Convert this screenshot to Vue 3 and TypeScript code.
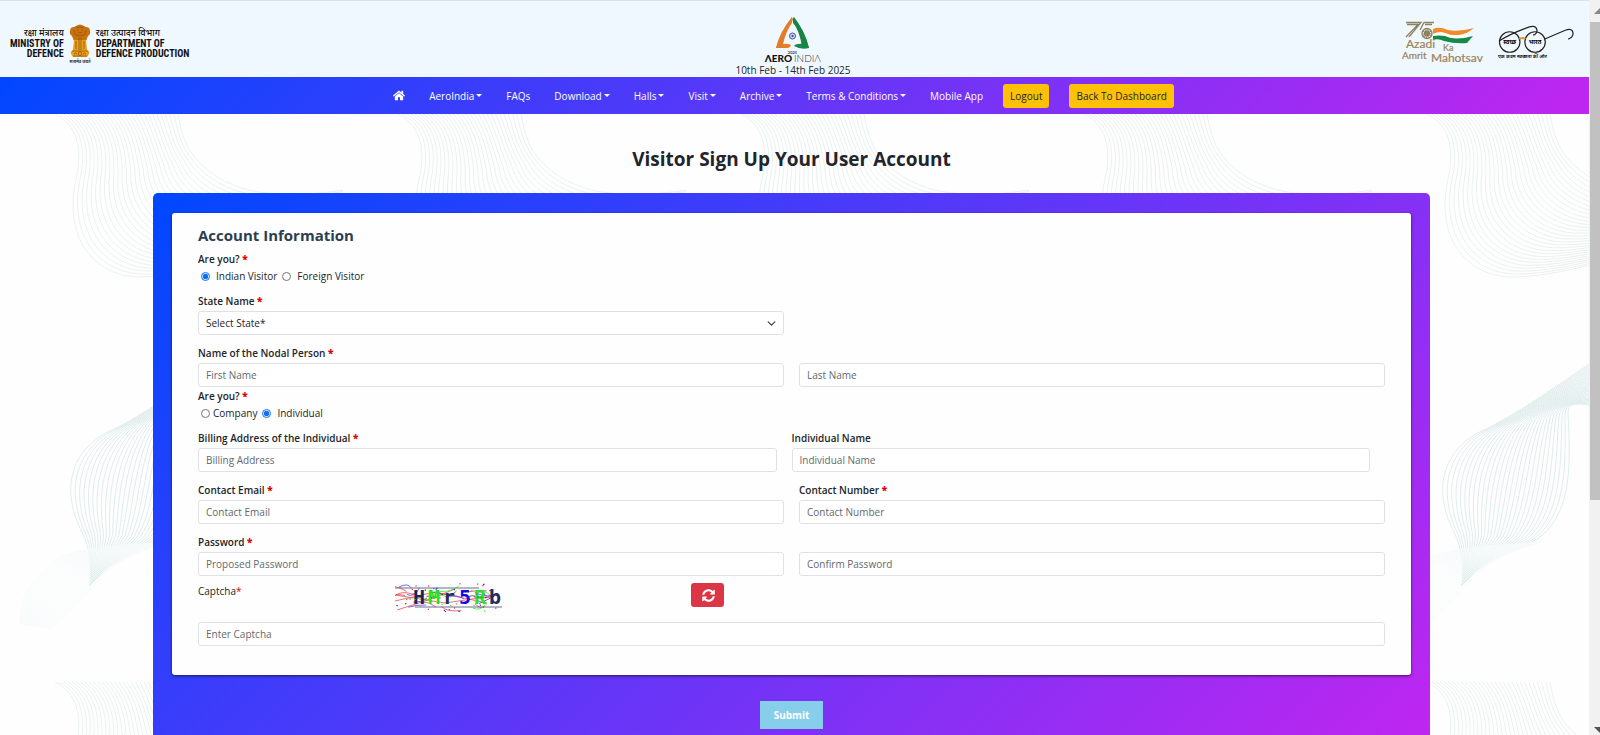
<script setup lang="ts">
import { ref } from 'vue'

interface NavItem {
  label: string
  menu: boolean
}

const navItems: NavItem[] = [
  { label: 'AeroIndia', menu: true },
  { label: 'FAQs', menu: false },
  { label: 'Download', menu: true },
  { label: 'Halls', menu: true },
  { label: 'Visit', menu: true },
  { label: 'Archive', menu: true },
  { label: 'Terms & Conditions', menu: true },
  { label: 'Mobile App', menu: false },
]

const visitorType = ref('indian')
const accountType = ref('individual')

// Each wave is a family of lines blended between two boundary curves.
function blend(from: number[], to: number[], count: number): string[] {
  const lines: string[] = []
  for (let i = 0; i < count; i++) {
    const t = i / (count - 1)
    const p = from.map((v, k) => (v + (to[k] - v) * t).toFixed(1))
    let d = `M${p[0]} ${p[1]}`
    for (let k = 2; k < p.length; k += 6) d += ` C${p.slice(k, k + 6).join(' ')}`
    lines.push(d)
  }
  return lines
}

const upperWave = blend(
  [55, 0, 80, 12, 82, 40, 76, 65, 62, 130, 100, 163, 140, 163, 200, 163, 280, 130, 343, 120],
  [178, 0, 182, 22, 186, 34, 198, 47, 212, 63, 235, 74, 258, 78, 290, 82, 320, 80, 343, 76],
  30,
)
const middleWave = blend(
  [250, 228, 190, 268, 150, 297, 116, 314, 66, 335, 62, 380, 82, 418, 90, 435, 92, 450, 90, 472],
  [250, 295, 205, 290, 196, 285, 196, 300, 198, 345, 202, 400, 165, 425, 140, 440, 115, 440, 90, 472],
  28,
)
const lowerWave = blend(
  [165, 428, 140, 432, 70, 430, 50, 450, 30, 470, 20, 480, 20, 510],
  [165, 430, 120, 440, 105, 460, 90, 475, 75, 495, 60, 505, 50, 515],
  22,
)

// Deterministic noise for the captcha picture.
let seed = 11
function rnd(max: number): number {
  seed = (seed * 16807) % 2147483647
  return Math.round((seed / 2147483647) * max * 10) / 10
}
const inks = ['#e0303a', '#19e619', '#3a2fd0', '#1f2a5c', '#d22b50']
const scribbles = Array.from({ length: 24 }, (_, i) => {
  const x = rnd(84)
  const y = 3 + rnd(22)
  return { d: `M${x} ${y} q${4 + rnd(6)} ${rnd(12) - 6} ${8 + rnd(12)} ${rnd(16) - 8}`, c: inks[i % 5] }
})
const specks = Array.from({ length: 46 }, (_, i) => ({ x: rnd(105), y: rnd(28), c: inks[(i * 2) % 5] }))
const letters = [
  { ch: 'H', x: 18, c: '#1c2454' },
  { ch: 'M', x: 33, c: '#1fe32a' },
  { ch: 'r', x: 48, c: '#262b58' },
  { ch: '5', x: 64, c: '#1508e0' },
  { ch: 'R', x: 79, c: '#26e52f' },
  { ch: 'b', x: 94, c: '#222a60' },
]
</script>

<template>
  <div class="window">
    <div class="page">
      <header class="masthead">
        <a class="ministry" href="#" aria-label="Ministry of Defence">
          <span class="org org-left">
            <span class="hindi">रक्षा मंत्रालय</span>
            <span class="latin">MINISTRY OF<br />DEFENCE</span>
          </span>
          <svg class="emblem" viewBox="0 0 22 40" aria-hidden="true">
            <g fill="#c9730f">
              <path d="M7 2 Q11-1 15 2 L17 3 Q21 3 21 7 Q22 10 19 12 L17 17 H5 L3 12 Q0 10 1 7 Q1 3 5 3Z" />
              <path d="M5 16 H17 L18 26 Q21 27 20 30 L18 33 H4 L2 30 Q1 27 4 26Z" fill="#e8a01c" />
            </g>
            <g fill="none" stroke="#8a4a08" stroke-width=".7">
              <path d="M7 4 Q11 2 15 4 M8 6 h1 M13 6 h1 M9 8 Q11 10 13 8 M4 6 Q7 7 6 11 M18 6 Q15 7 16 11 M7 11 Q11 13 15 11" />
              <path d="M7 17 V25 M10 14 V26 M12 14 V26 M15 17 V25 M3 27 H19 M4 32 H18" />
              <circle cx="11" cy="29.500" r="1.800" />
              <path d="M5 30 q1.500-2 3 0 M14 30 q1.500-2 3 0" />
            </g>
            <text x="11" y="38.500" text-anchor="middle" font-size="4" font-weight="700" fill="#333">सत्यमेव जयते</text>
          </svg>
          <span class="org">
            <span class="hindi">रक्षा उत्पादन विभाग</span>
            <span class="latin">DEPARTMENT OF<br />DEFENCE PRODUCTION</span>
          </span>
        </a>

        <div class="event">
          <svg class="event-logo" viewBox="0 0 60 48" role="img" aria-label="Aero India 2025">
            <path d="M29 1 Q18 16 13 32 H24 Q27 32 28 29 Q25 27 20 28 Q23 15 29 7Z" fill="#e5812b" />
            <path d="M31 1 Q42 15 46 32 Q38 34 31 30 Q33 27 41 28 Q37 14 30 7Z" fill="#1c8a48" />
            <path d="M29 1 Q16 17 13 32 L19 32 Q21 15 30 4Z" fill="#e07c2a" />
            <path d="M30 1 Q41 13 46 32 L39 31 Q37 16 30 6Z" fill="#178443" />
            <circle cx="29.500" cy="20" r="3" fill="#dfe5f6" stroke="#3c4da0" />
            <circle cx="29.500" cy="20" r="1.200" fill="#3c4da0" />
            <text x="29.500" y="37.500" text-anchor="middle" font-size="4" font-weight="700" fill="#444">2025</text>
            <text x="29" y="46" text-anchor="end" font-size="10" font-weight="900" fill="#111">ΛERO</text>
            <text x="31" y="46" font-size="10" font-weight="300" fill="#333">INDIΛ</text>
          </svg>
          <p class="event-date">10th Feb - 14th Feb 2025</p>
        </div>

        <div class="partners">
          <svg class="azadi" viewBox="0 0 90 42" role="img" aria-label="Azadi Ka Amrit Mahotsav">
            <g fill="none" stroke="#8d8260" stroke-width="1.300">
              <path d="M4 1.500 H19 L7 16 M5 3.500 H16 L4 16 M32 1.500 H22 L18 9 M30 3.500 H23" />
              <circle cx="25" cy="12.500" r="5" />
              <circle cx="25" cy="12.500" r="2.500" fill="#8d8260" />
              <circle cx="25" cy="12.500" r="4" stroke-dasharray="1 1" />
            </g>
            <path d="M31 8 Q37 5 46 9 Q57 11 72 7 L65 12 Q53 17 43 12 Q36 10 31 13Z" fill="#f28c28" />
            <path d="M31 13 Q37 10 43 12 Q53 17 67 11 L64 16 Q53 19 43 16 Q37 15 31 17Z" fill="#fff" />
            <path d="M31 15 Q37 14 43 15 Q53 20 71 15 L65 22 Q53 23 42 20 Q36 17 31 19Z" fill="#128b46" />
            <g fill="#9a8258" stroke="#9a8258" stroke-width=".2">
              <text x="4" y="27" font-size="12">Azadi</text>
              <text x="41" y="30" font-size="9">Ka</text>
              <text x="0" y="38" font-size="10">Amrit</text>
              <text x="29" y="41" font-size="12">Mahotsav</text>
            </g>
          </svg>
          <svg class="glasses" viewBox="0 0 80 36" role="img" aria-label="स्वच्छ भारत">
            <g fill="none" stroke="#222" stroke-width="1.200">
              <circle cx="12" cy="18" r="10.500" />
              <circle cx="38" cy="18" r="10.500" />
              <path d="M1 17 Q12 10 28 4 Q39-1 40 6 Q40 10 36 11 M48 15 L69 6 Q77 3 77 10 Q76 14 72 15" />
            </g>
            <path d="M22 15 Q25 13 28 15" fill="none" stroke="#d89a32" stroke-width="2" />
            <text x="12" y="20" text-anchor="middle" font-size="6" font-weight="700">स्वच्छ</text>
            <text x="38" y="20" text-anchor="middle" font-size="6" font-weight="700">भारत</text>
            <text x="25" y="34" text-anchor="middle" font-size="5" font-weight="600">एक कदम स्वच्छता की ओर</text>
          </svg>
        </div>
      </header>

      <nav class="nav" aria-label="Main">
        <a class="nav-link" href="#" aria-label="Home">
          <svg class="home" viewBox="0 0 576 512" aria-hidden="true">
            <path fill="currentColor" d="M488 312.700V456c0 13.300-10.700 24-24 24H348c-6.600 0-12-5.400-12-12V356c0-6.600-5.400-12-12-12h-72c-6.600 0-12 5.400-12 12v112c0 6.600-5.400 12-12 12H112c-13.300 0-24-10.700-24-24V312.700c0-3.600 1.600-7 4.400-9.300l188-154.800c4.400-3.600 10.800-3.600 15.300 0l188 154.800c2.700 2.300 4.300 5.700 4.300 9.300zm83.600-60.900L488 182.900V44.400c0-6.600-5.400-12-12-12h-56c-6.600 0-12 5.400-12 12V117l-89.500-73.700c-17.700-14.600-43.300-14.600-61 0L4.400 251.800c-5.100 4.200-5.800 11.800-1.600 16.900l25.500 31c4.200 5.100 11.800 5.800 16.900 1.600l235.200-193.700c4.400-3.600 10.800-3.600 15.300 0l235.200 193.700c5.100 4.200 12.700 3.500 16.900-1.600l25.500-31c4.200-5.200 3.400-12.700-1.700-16.900z" />
          </svg>
        </a>
        <a v-for="item in navItems" :key="item.label" class="nav-link" href="#">
          {{ item.label }}<span v-if="item.menu" class="caret" aria-hidden="true"></span>
        </a>
        <span class="nav-actions">
          <button class="nav-button" type="button">Logout</button>
          <button class="nav-button" type="button">Back To Dashboard</button>
        </span>
      </nav>

      <main class="main">
        <svg class="waves" aria-hidden="true">
          <defs>
            <pattern id="wave-tile" width="343" height="568" patternUnits="userSpaceOnUse">
              <g fill="none" stroke-width="1">
                <path v-for="d in upperWave" :key="d" :d="d" stroke="#e9f1ee" />
                <path v-for="d in middleWave" :key="d" :d="d" stroke="#e0ecec" />
                <path v-for="d in lowerWave" :key="d" :d="d" stroke="#f6fafa" />
              </g>
            </pattern>
          </defs>
          <rect width="100%" height="100%" fill="url(#wave-tile)" />
        </svg>

        <h1 class="title">Visitor Sign Up Your User Account</h1>

        <form class="card" @submit.prevent>
          <div class="panel">
            <h2 class="section-title">Account Information</h2>

            <fieldset class="choice">
              <legend>Are you? <b class="req">*</b></legend>
              <div class="radios">
                <input id="indian" v-model="visitorType" type="radio" name="visitor" value="indian" />
                <label class="wide" for="indian">Indian Visitor</label>
                <input id="foreign" v-model="visitorType" type="radio" name="visitor" value="foreign" />
                <label class="wide" for="foreign">Foreign Visitor</label>
              </div>
            </fieldset>

            <div class="row">
              <div class="field">
                <label for="state">State Name <b class="req">*</b></label>
                <span class="select-wrap">
                  <select id="state" class="control">
                    <option>Select State*</option>
                  </select>
                  <svg class="chevron" viewBox="0 0 16 16" aria-hidden="true">
                    <path d="m2 5 6 6 6-6" fill="none" stroke="#343a40" stroke-width="2" stroke-linecap="round" stroke-linejoin="round" />
                  </svg>
                </span>
              </div>
            </div>

            <div class="row flush">
              <div class="field">
                <label for="first">Name of the Nodal Person <b class="req">*</b></label>
                <input id="first" class="control" type="text" placeholder="First Name" />
              </div>
              <div class="field">
                <input class="control" type="text" placeholder="Last Name" aria-label="Last Name" />
              </div>
            </div>

            <fieldset class="choice">
              <legend>Are you? <b class="req">*</b></legend>
              <div class="radios">
                <input id="company" v-model="accountType" type="radio" name="account" value="company" />
                <label for="company">Company</label>
                <input id="individual" v-model="accountType" type="radio" name="account" value="individual" />
                <label class="wide" for="individual">Individual</label>
              </div>
            </fieldset>

            <div class="row inset">
              <div class="field">
                <label for="billing">Billing Address of the Individual <b class="req">*</b></label>
                <input id="billing" class="control" type="text" placeholder="Billing Address" />
              </div>
              <div class="field">
                <label for="iname">Individual Name</label>
                <input id="iname" class="control" type="text" placeholder="Individual Name" />
              </div>
            </div>

            <div class="row">
              <div class="field">
                <label for="email">Contact Email <b class="req">*</b></label>
                <input id="email" class="control" type="email" placeholder="Contact Email" />
              </div>
              <div class="field">
                <label for="phone">Contact Number <b class="req">*</b></label>
                <input id="phone" class="control" type="tel" placeholder="Contact Number" />
              </div>
            </div>

            <div class="row flush">
              <div class="field">
                <label for="pass">Password <b class="req">*</b></label>
                <input id="pass" class="control" type="password" placeholder="Proposed Password" />
              </div>
              <div class="field">
                <input class="control" type="password" placeholder="Confirm Password" aria-label="Confirm Password" />
              </div>
            </div>

            <div class="captcha">
              <label for="captcha">Captcha<span class="req">*</span></label>
              <svg class="captcha-image" viewBox="0 0 108 30" role="img" aria-label="Captcha characters">
                <g fill="none" stroke-width=".7">
                  <path d="M0 5 H84 M20 24 H107" stroke="#28305e" />
                  <path d="M0 12 L50 20 L104 12 M2 27 L30 18 L60 6 M0 18 L40 9 L92 20" stroke="#dc3a44" />
                  <path v-for="s in scribbles" :key="s.d" :d="s.d" :stroke="s.c" />
                </g>
                <g class="captcha-letters">
                  <text v-for="l in letters" :key="l.ch" :x="l.x" y="21" :fill="l.c">{{ l.ch }}</text>
                </g>
                <rect v-for="(s, i) in specks" :key="i" :x="s.x" :y="s.y" width="1.200" height="1.200" :fill="s.c" />
              </svg>
              <button class="refresh" type="button" aria-label="Refresh captcha">
                <svg viewBox="0 0 512 512" aria-hidden="true">
                  <path fill="currentColor" d="M370.700 133.300C339.500 104 298.900 88 255.800 88c-77.500.1-144.300 53.200-162.800 126.900-1.300 5.400-6.100 9.100-11.700 9.100H24.100c-7.500 0-13.200-6.800-11.800-14.200C33.900 94.900 134.800 8 256 8c66.400 0 126.800 26.100 171.300 68.700L463 41c15.100-15.100 41-4.400 41 17v134c0 13.300-10.700 24-24 24H346c-21.400 0-32.100-25.900-17-41l41.700-41.700zM32 296h134c21.400 0 32.100 25.900 17 41l-41.800 41.800c31.300 29.300 71.800 45.300 114.900 45.300 77.400-.1 144.300-53.100 162.800-126.800 1.300-5.400 6.100-9.100 11.700-9.100h57.300c7.500 0 13.200 6.800 11.800 14.200C478.100 417.100 377.200 504 256 504c-66.400 0-126.800-26.100-171.300-68.700L49 471c-15.100 15.100-41 4.400-41-17V320c0-13.300 10.700-24 24-24z" />
                </svg>
              </button>
            </div>
            <input id="captcha" class="control" type="text" placeholder="Enter Captcha" />
          </div>

          <button class="submit" type="submit">Submit</button>
        </form>
      </main>
    </div>

    <div class="scrollbar" aria-hidden="true">
      <span class="arrow up"></span>
      <span class="thumb"></span>
      <span class="arrow down"></span>
    </div>
  </div>
</template>

<style>
body {
  margin: 0;
  overflow: hidden;
}
</style>

<style scoped>
* {
  box-sizing: border-box;
}

.window {
  display: flex;
  height: 100vh;
  overflow: hidden;
  font-family: "Open Sans", "Noto Sans", sans-serif;
  font-size: 10px;
  line-height: 16px;
  color: #212529;
}

.page {
  flex: 1;
  min-width: 0;
  overflow: hidden;
}

.masthead {
  display: grid;
  grid-template-columns: 1fr auto 1fr;
  align-items: start;
  height: 77px;
  padding: 0 13px 0 10px;
  border-top: 1px solid #d9e2e8;
  background: #f0f8ff;
}

.ministry {
  display: flex;
  gap: 5px;
  padding-top: 23px;
  color: #111;
  text-decoration: none;
}

.org {
  display: flex;
  flex-direction: column;
  padding-top: 2px;
}

.org-left {
  text-align: right;
}

.hindi {
  font-size: 9px;
  line-height: 13px;
  font-weight: 500;
  white-space: nowrap;
}

.latin {
  font-family: "Roboto Condensed", "Liberation Sans Narrow", Roboto, sans-serif;
  font-size: 10px;
  line-height: 10px;
  font-weight: 700;
  white-space: nowrap;
}

.emblem {
  width: 22px;
  height: 40px;
}

.event {
  display: flex;
  flex-direction: column;
  align-items: center;
  padding-top: 15px;
}

.event-logo {
  width: 60px;
  height: 48px;
  font-family: Lato, sans-serif;
  overflow: visible;
}

.event-date {
  margin: -2px 0 0;
  line-height: 16px;
}

.partners {
  display: flex;
  justify-content: flex-end;
  gap: 6px;
  padding-top: 20px;
}

.azadi {
  width: 90px;
  height: 42px;
  font-family: Lato, sans-serif;
  overflow: visible;
}

.glasses {
  width: 78px;
  height: 36px;
  margin-top: 3px;
  overflow: visible;
}

.nav {
  display: flex;
  align-items: center;
  justify-content: center;
  gap: 24px;
  height: 37px;
  padding-right: 22px;
  background: linear-gradient(135deg, #0047ff, #c026f0);
}

.nav-link {
  color: #fff;
  text-decoration: none;
  white-space: nowrap;
}

.home {
  display: block;
  width: 12px;
  height: 11px;
}

.caret {
  display: inline-block;
  margin-left: 2px;
  vertical-align: 3px;
  border: 3px solid transparent;
  border-top-color: #fff;
  border-bottom: 0;
}

.nav-actions {
  display: flex;
  gap: 20px;
  margin-left: -4px;
}

.nav-button {
  height: 24px;
  padding: 0 7px;
  border: 0;
  border-radius: 3px;
  background: #ffc107;
  color: #212529;
  font: inherit;
  white-space: nowrap;
}

.main {
  position: relative;
  padding: 30px 159px 0 153px;
  background: #fefefe;
}

.waves {
  position: absolute;
  inset: 0;
  width: 100%;
  height: 100%;
}

.title {
  position: relative;
  margin: 0 0 19px;
  font-size: 19px;
  line-height: 30px;
  font-weight: 700;
  text-align: center;
}

.card {
  position: relative;
  display: flex;
  flex-direction: column;
  align-items: center;
  padding: 20px 19px 22px;
  border-radius: 5px;
  background: linear-gradient(135deg, #0047ff, #c026f0);
}

.panel {
  width: 100%;
  padding: 10px 26px 29px;
  border-radius: 3px;
  background: #fefefe;
  box-shadow: 0 1px 3px rgba(0, 0, 0, 0.6);
}

.section-title {
  margin: 0 0 3px;
  font-size: 15px;
  line-height: 24px;
  font-weight: 700;
  color: #2c3e50;
}

.choice {
  margin: 0;
  padding: 0 0 8px;
  border: 0;
}

.choice legend,
.field label {
  display: block;
  height: 18px;
  padding: 0;
  line-height: 18px;
  font-weight: 600;
  white-space: nowrap;
}

.req {
  color: #e00000;
}

.radios {
  display: flex;
  align-items: center;
  height: 16px;
}

.radios input {
  width: 9px;
  height: 9px;
  margin: 0 3px;
  accent-color: #0d6efd;
}

.radios input:not(:first-child) {
  margin-left: 5px;
}

.radios .wide {
  margin-left: 3px;
}

.row {
  display: grid;
  grid-template-columns: 1fr 1fr;
  align-items: end;
  gap: 15px;
  margin-bottom: 9px;
}

.row.flush {
  margin-bottom: 0;
}

.row.inset {
  padding-right: 15px;
}

.field label {
  margin-bottom: 1px;
}

.control {
  display: block;
  width: 100%;
  height: 24px;
  margin: 0;
  padding: 0 7px;
  border: 1px solid #dee2e6;
  border-radius: 3px;
  background: #fff;
  color: #212529;
  font: inherit;
  line-height: 22px;
  appearance: none;
}

.control::placeholder {
  color: #62686e;
  opacity: 1;
}

.select-wrap {
  position: relative;
  display: block;
}

.chevron {
  position: absolute;
  top: 8px;
  right: 8px;
  width: 9px;
  height: 9px;
  pointer-events: none;
}

.captcha {
  display: grid;
  grid-template-columns: 2fr 3fr 7fr;
  align-items: start;
  height: 46px;
  padding: 7px 4px 0 0;
}

.captcha-image {
  width: 108px;
  height: 30px;
}

.captcha-letters {
  font-family: "DejaVu Sans Mono", monospace;
  font-size: 20px;
  font-weight: 700;
}

.refresh {
  display: flex;
  align-items: center;
  justify-content: center;
  width: 33px;
  height: 24px;
  padding: 0 0 0 3px;
  border: 0;
  border-radius: 3px;
  background: #dc3545;
  color: #fff;
}

.refresh svg {
  width: 13px;
  height: 13px;
}

.submit {
  height: 28px;
  margin-top: 26px;
  padding: 0 14px;
  border: 0;
  background: #87ceeb;
  color: #fff;
  font: inherit;
  font-weight: 700;
}

.scrollbar {
  display: flex;
  flex-direction: column;
  align-items: flex-start;
  width: 11px;
  padding-left: 1px;
  background: #f1f1f1;
  overflow: hidden;
}

.thumb {
  flex: 0 0 65%;
  width: 100%;
  margin: 8px 0 auto;
  background: #c1c1c1;
}

.arrow {
  margin-left: 4px;
  border: 6px solid transparent;
}

.arrow.up {
  margin-top: 8px;
  border-top: 0;
  border-bottom-color: #888;
}

.arrow.down {
  margin-bottom: 2px;
  border-bottom: 0;
  border-top-color: #505050;
}
</style>
